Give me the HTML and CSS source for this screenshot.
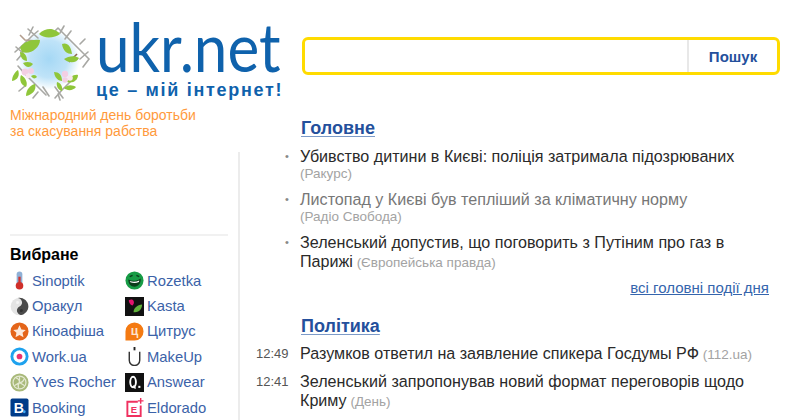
FILE: index.html
```html
<!DOCTYPE html>
<html lang="uk">
<head>
<meta charset="utf-8">
<title>ukr.net</title>
<link rel="stylesheet" href="styles.css">
</head>
<body>
<div class="page">
  <aside class="left">
    <div class="brand">
      <svg class="wreath" viewBox="0 0 90 85" aria-hidden="true">
        <defs>
          <radialGradient id="sky" cx="50%" cy="45%" r="50%">
            <stop offset="0" stop-color="#a5d8f5"/>
            <stop offset="0.6" stop-color="#bfe3f8"/>
            <stop offset="1" stop-color="#ffffff"/>
          </radialGradient>
        </defs>
        <circle cx="44" cy="42" r="31" fill="url(#sky)"/>
        <g fill="none" stroke="#a8a8a4" stroke-width="1.600" stroke-linecap="round">
          <path d="M10 32l9-8 8-8 6-5M23 9l10 9M28 7l-4 8M12 40l6-7-7-6"/>
          <path d="M53 8l-5 5M53 8l8 8 8 8 8 8 7 7-6 8M59 6l-4 7M66 11l-6 8M75 24l5-5M83 32l-8 7"/>
          <path d="M13 46l7 8 8 8 8 8 5 5M33 72l-5 6M38 67l6 9M20 66l-6 5"/>
          <path d="M50 78l7-8 7-7 6-6M50 67l8 11M55 80l-2-6"/>
        </g>
        <path d="M32 21l-12-1-5-5" fill="none" stroke="#b39e8e" stroke-width="1.600"/>
        <path d="M64 42l8-8" fill="none" stroke="#8c6650" stroke-width="1.600"/>
        <g fill="#8fc63a">
          <path d="M15 28c3-6 11-9 20-8 0 8-10 15-18 12z"/>
          <path d="M34 14c4-5 12-6 15-4 3 1 5 2 6 4-5 4-16 5-21 0z"/>
          <path d="M57 24c5-2 9 2 10 10-5 0-9-3-10-10z"/>
          <path d="M59 39c4-3 11-4 15-1-2 5-10 6-15 1z"/>
          <path d="M15 32c4 0 7 3 7 9-4 0-7-4-7-9z"/>
          <path d="M18 43c4-2 8-1 10 1-3 4-7 4-10-1z"/>
          <path d="M7 61c0-5 3-9 6-11 2 5 0 10-6 11z"/>
          <path d="M16 55c5 3 7 8 5 12-5-2-7-7-5-12z"/>
          <path d="M21 76c0-6 4-11 9-12 2 6-3 11-9 12z"/>
          <path d="M26 56c3-2 5-1 6 1-2 2-4 2-6-1z"/>
          <path d="M49 52c5 0 8 3 8 9 0 0-7 0-8-9z"/>
          <path d="M62 62c2-5 7-8 11-7 0 5-5 9-11 7z"/>
          <path d="M59 68c4-4 9-3 12-1-3 4-9 4-12 1z"/>
          <path d="M52 62c4 1 6 5 5 9-4-1-6-5-5-9z"/>
        </g>
        <g fill="#f3cfe4">
          <circle cx="20" cy="52" r="3.400"/><circle cx="26" cy="51" r="3"/><circle cx="23" cy="56" r="2.400" fill="#f8e6ef"/>
          <circle cx="60" cy="54" r="3.200"/><circle cx="65" cy="58" r="2.800" fill="#f8e6ef"/><circle cx="60" cy="60" r="2.800"/>
        </g>
      </svg>
      <div class="wordmark">
        <div class="wordmark-name">ukr.net</div>
        <div class="wordmark-slogan">це – мій інтернет!</div>
      </div>
    </div>
    <p class="promo">Міжнародний день боротьби<br>за скасування рабства</p>
    <div class="rail">
      <section class="fav">
        <h2 class="fav-title">Вибране</h2>
        <ul class="fav-grid">
          <li class="fav-item">
            <svg class="ico" viewBox="0 0 20 20"><rect x="7" y=".5" width="6" height="15" rx="3" fill="#8fb0d6"/><rect x="8.800" y="6" width="2.400" height="9" fill="#d2322d"/><circle cx="10" cy="15.500" r="4" fill="#cf2f2a"/></svg>
            <a class="fav-link" href="#">Sinoptik</a>
          </li>
          <li class="fav-item">
            <svg class="ico" viewBox="0 0 20 20"><circle cx="10" cy="10" r="9.300" fill="#e4e4e4"/><g transform="rotate(-25 10 10)"><path d="M10 .7A9.300 9.300 0 0 1 10 19.300 4.650 4.650 0 0 1 10 10 4.650 4.650 0 0 0 10 .7z" fill="#4a4a4a"/><circle cx="10" cy="5.350" r="1.600" fill="#f4f4f4"/><circle cx="10" cy="14.650" r="1.600" fill="#333"/></g></svg>
            <a class="fav-link" href="#">Оракул</a>
          </li>
          <li class="fav-item">
            <svg class="ico" viewBox="0 0 20 20"><circle cx="10" cy="10" r="9.500" fill="#e4651a"/><path d="M10 3.500l2 4.300 4.600.5-3.400 3.100 1 4.600-4.200-2.400-4.200 2.400 1-4.600-3.400-3.100 4.600-.5z" fill="#fbeadd"/></svg>
            <a class="fav-link" href="#">Кіноафіша</a>
          </li>
          <li class="fav-item">
            <svg class="ico" viewBox="0 0 20 20"><circle cx="10" cy="10" r="9.500" fill="#1ea2ee"/><circle cx="10" cy="10" r="6.500" fill="#fff"/><circle cx="10" cy="10" r="3" fill="#e8326e"/></svg>
            <a class="fav-link" href="#">Work.ua</a>
          </li>
          <li class="fav-item">
            <svg class="ico" viewBox="0 0 20 20"><circle cx="10" cy="10" r="9.500" fill="#a9b97a"/><g fill="none" stroke="#e4e9d2" stroke-width="1.300"><circle cx="10" cy="10" r="6.800"/><path d="M10 10V3.500M10 10l5.500 3.500M10 10l-5.500 3.500M6 5c3 1 4 3 4 5M15 6c-1 3-3 4-5 4M9 16c-1-3 0-5 1-6"/></g></svg>
            <a class="fav-link" href="#">Yves Rocher</a>
          </li>
          <li class="fav-item">
            <svg class="ico" viewBox="0 0 20 20"><rect x=".5" y=".5" width="19" height="19" rx="2" fill="#003b88"/><text class="ico-b" x="4" y="15.500">B</text><circle cx="15" cy="14.500" r="1.500" fill="#3fa9f5"/></svg>
            <a class="fav-link" href="#">Booking</a>
          </li>
          <li class="fav-item">
            <svg class="ico" viewBox="0 0 20 20"><circle cx="10" cy="10" r="9.500" fill="#179b45"/><path d="M3.500 9c4 2 9 2 13-1 .5 5-2.500 8.500-6.500 8.500S3.500 14 3.500 9z" fill="#0b3d1c"/><path d="M5 10.500c3 1.200 7 1 10-.5l-.3 1.500c-3 1.300-6 1.300-9 .3z" fill="#fff"/><path d="M5 6l3-1.500M12 4.500l3 1.500" stroke="#0b3d1c" stroke-width="1.500" fill="none"/></svg>
            <a class="fav-link" href="#">Rozetka</a>
          </li>
          <li class="fav-item">
            <svg class="ico" viewBox="0 0 20 20"><rect width="20" height="20" fill="#111"/><path d="M4 3.500c2-1.500 4-1 5 .5 1 2 0 4-1 5-2 0-4-3-4-5.500z" fill="#e2136e"/><path d="M9 16c0-4 4-8 9-8 0 4-3 9-9 8z" fill="#5fb13a"/></svg>
            <a class="fav-link" href="#">Kasta</a>
          </li>
          <li class="fav-item">
            <svg class="ico" viewBox="0 0 20 20"><path d="M10 .5a9.500 9.500 0 0 1 0 19H.5V10A9.500 9.500 0 0 1 10 .5z" fill="#f47a12"/><text class="ico-c" x="10" y="14">ц</text></svg>
            <a class="fav-link" href="#">Цитрус</a>
          </li>
          <li class="fav-item">
            <svg class="ico" viewBox="0 0 20 20"><path d="M4.500 5v9a5.500 5.500 0 0 0 11 0V5" fill="none" stroke="#333" stroke-width="1.500"/><rect x="9" y="0" width="2" height="3.500" fill="#222"/></svg>
            <a class="fav-link" href="#">MakeUp</a>
          </li>
          <li class="fav-item">
            <svg class="ico" viewBox="0 0 20 20"><rect width="20" height="20" fill="#111"/><ellipse cx="8.500" cy="9.500" rx="3" ry="5.500" fill="none" stroke="#fff" stroke-width="2"/><path d="M9 13l2 3.500" stroke="#fff" stroke-width="1.500"/><rect x="14" y="13.500" width="2.200" height="2.200" fill="#fff"/></svg>
            <a class="fav-link" href="#">Answear</a>
          </li>
          <li class="fav-item">
            <svg class="ico" viewBox="0 0 20 20"><path d="M13.500 4H2.500v15h14V8" fill="none" stroke="#f0305f" stroke-width="2"/><path d="M16.500 0v6M13.500 3h6" stroke="#f0305f" stroke-width="1.500"/><text class="ico-e" x="6" y="15.500">E</text></svg>
            <a class="fav-link" href="#">Eldorado</a>
          </li>
        </ul>
      </section>
    </div>
  </aside>
  <main class="main">
    <form class="search">
      <input class="search-input" type="text" aria-label="Пошук">
      <button class="search-btn" type="button">Пошук</button>
    </form>
    <section class="block-top">
      <h2 class="block-title"><a href="#">Головне</a></h2>
      <ul class="news news-main">
        <li class="news-item"><span class="mark">•</span><div><a class="title" href="#">Убивство дитини в Києві: поліція затримала підозрюваних</a> <span class="src">(Ракурс)</span></div></li>
        <li class="news-item"><span class="mark">•</span><div><a class="title title-seen" href="#">Листопад у Києві був тепліший за кліматичну норму</a> <span class="src">(Радіо Свобода)</span></div></li>
        <li class="news-item"><span class="mark">•</span><div><a class="title" href="#">Зеленський допустив, що поговорить з Путіним про газ в Парижі</a> <span class="src">(Європейська правда)</span></div></li>
      </ul>
      <div class="more"><a href="#">всі головні події дня</a></div>
    </section>
    <section class="block-next">
      <h2 class="block-title"><a href="#">Політика</a></h2>
      <ul class="news news-timed">
        <li class="news-item"><time class="time">12:49</time><div><a class="title" href="#">Разумков ответил на заявление спикера Госдумы РФ</a> <span class="src">(112.ua)</span></div></li>
        <li class="news-item"><time class="time">12:41</time><div><a class="title" href="#">Зеленський запропонував новий формат переговорів щодо Криму</a> <span class="src">(День)</span></div></li>
      </ul>
    </section>
  </main>
</div>
</body>
</html>
```
FILE: styles.css
```css
* { box-sizing: border-box; }
html, body { margin: 0; padding: 0; height: 420px; overflow: hidden; background: #fff; }
body { font-family: "Liberation Sans", Arial, sans-serif; color: #222; }
ul { list-style: none; margin: 0; padding: 0; }
a { text-decoration: none; color: inherit; }
.page { display: flex; height: 420px; }

.left { width: 240px; flex: none; display: flex; flex-direction: column; }
.brand { display: flex; padding: 20px 0 0 5px; height: 105px; width: 290px; }
.wreath { width: 90px; height: 85px; flex: none; filter: blur(0.5px); }
.wordmark { margin-left: 1px; color: #0f62ac; }
.wordmark-name { font-family: Lato, sans-serif; font-size: 68px; line-height: 52px; margin-bottom: 8px; transform: scaleX(0.885); transform-origin: left center; }
.wordmark-slogan { font-size: 18px; font-weight: bold; line-height: 20px; letter-spacing: 1.700px; white-space: nowrap; }
.promo { margin: 2px 0 0 10px; font-size: 14px; line-height: 16px; color: #ff9a3c; width: 220px; }
.rail { flex: 1; margin-top: 13px; padding: 82px 10px 0 10px; border-right: 2px solid #ececec; }
.fav { border-top: 2px solid #f1f1f1; padding-top: 9px; }
.fav-title { margin: 0 0 3px; font-size: 16px; line-height: 20px; font-weight: bold; color: #000; }
.fav-grid { display: grid; grid-template-columns: 115px 1fr; grid-template-rows: repeat(6, 25.4px); grid-auto-flow: column; }
.fav-item { display: flex; align-items: center; gap: 3px; }
.ico { width: 19px; height: 19px; flex: none; }
.fav-link { font-size: 14.800px; color: #3b62a8; white-space: nowrap; }
.ico-b { font: bold 15px "Liberation Sans", sans-serif; fill: #fff; }
.ico-c { font: bold 13px "Liberation Sans", sans-serif; fill: #fde3cc; text-anchor: middle; }
.ico-e { font: bold 10px "Liberation Sans", sans-serif; fill: #f0305f; }

.main { flex: 1; min-width: 0; }
.search { display: flex; margin: 37px 20px 0 62px; height: 38px; border: 3px solid #ffdb00; border-radius: 6px; background: #fff; }
.search-input { flex: 1; min-width: 0; border: 0; outline: 0; background: transparent; }
.search-btn { width: 90px; border: 0; border-left: 2px solid #e8e8e8; background: transparent; font: bold 15px "Liberation Sans", sans-serif; color: #24509c; padding: 0; }
.block-top { margin-top: 42px; }
.block-next { margin-top: 18px; }
.block-title { margin: 0 0 8px 61px; font-size: 18px; line-height: 22px; font-weight: bold; color: #24509c; }
.block-title a { text-decoration: underline; text-underline-offset: 2px; text-decoration-color: #7d9bc8; }
.news { font-size: 13.500px; line-height: 16px; }
.news-item { display: grid; margin-bottom: 8px; }
.news-main .news-item { grid-template-columns: 60px 440px; }
.news-timed { margin-top: -1px; }
.news-timed .news-item { grid-template-columns: 60px 462px; }
.news-timed .news-item:first-child { margin-bottom: 9px; }
.mark { color: #888; font-size: 11px; line-height: 19px; padding-left: 45px; }
.time { font-size: 13px; line-height: 19px; color: #555; padding-left: 16px; }
.title { font-size: 16.120px; line-height: 19px; color: #2a2a2a; }
.title-seen { color: #777; }
.src { color: #a3a3a3; white-space: nowrap; }
.more { margin: 0 31px 0 0; text-align: right; font-size: 15px; line-height: 18px; color: #3565ad; }
.more a { text-decoration: underline; }
```
